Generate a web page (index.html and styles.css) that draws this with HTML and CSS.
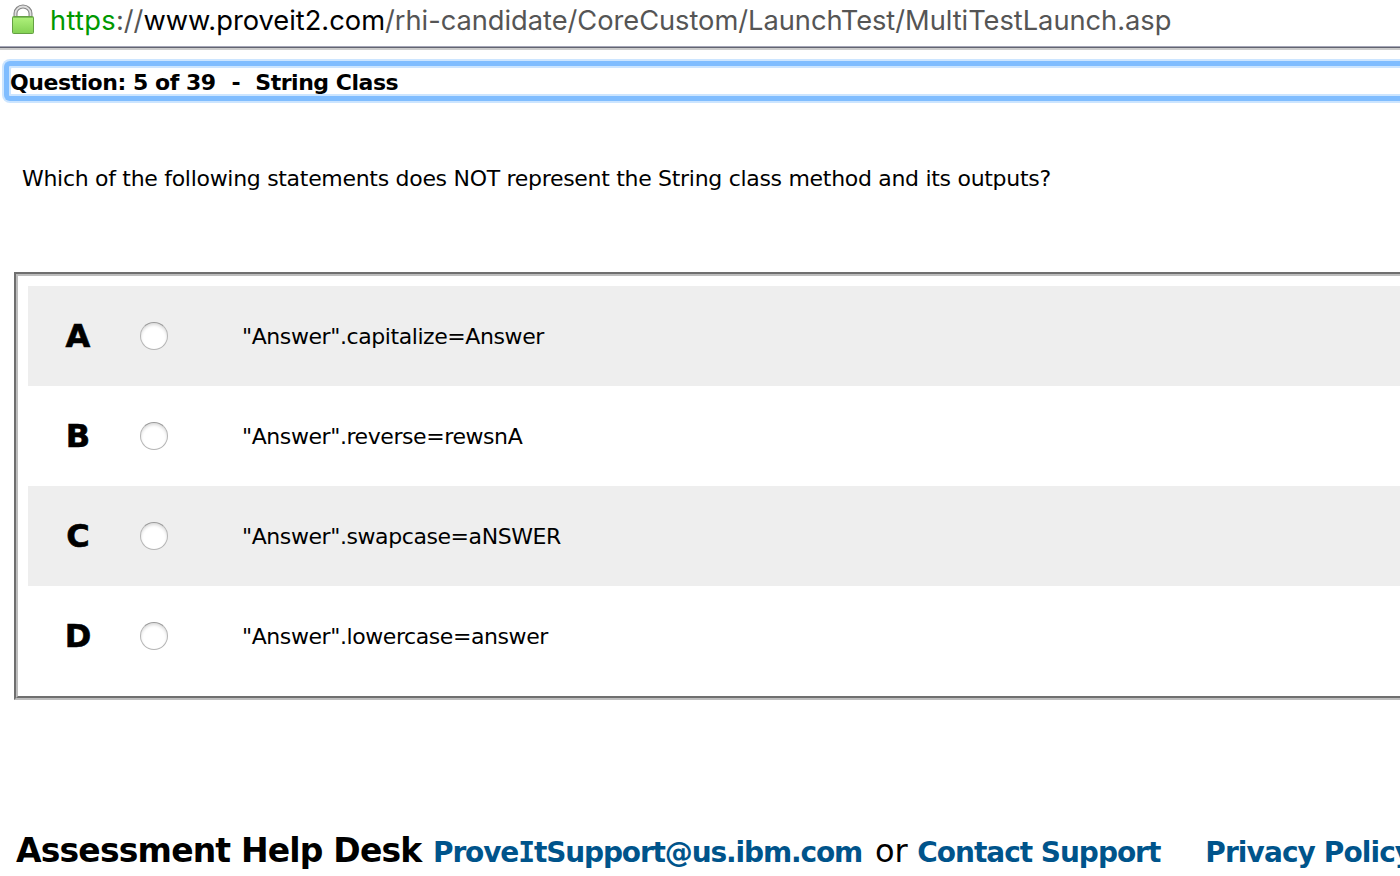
FILE: index.html
```html
<!DOCTYPE html>
<html lang="en">
<head>
<meta charset="utf-8">
<title>Assessment</title>
<link rel="stylesheet" href="styles.css">
</head>
<body>
<header class="address">
  <svg class="lock" width="24" height="32" viewBox="0 0 24 32">
    <defs>
      <linearGradient id="body" x1="0" y1="0" x2="0" y2="1"><stop offset="0" stop-color="#b1f27d"/><stop offset="1" stop-color="#83d153"/></linearGradient>
    </defs>
    <path d="M4.5 14V9.5a7.5 7 0 0 1 15 0V14" fill="none" stroke="#858585" stroke-width="4"/>
    <path d="M4.5 14V9.5a7.5 7 0 0 1 15 0V14" fill="none" stroke="#dedede" stroke-width="1.8"/>
    <rect x="1.5" y="12.5" width="21" height="17" rx="1" fill="url(#body)" stroke="#65a044"/>
    <path d="M2 13.5h20" stroke="#7cbd57"/>
  </svg>
  <div class="url"><span class="scheme">https</span><span class="sep">://</span><span class="host">www.proveit2.com</span><span class="path">/rhi-candidate/CoreCustom/LaunchTest/MultiTestLaunch.asp</span></div>
</header>
<main>
  <div class="ring"><div class="ring-mid"><h1 class="title"><span class="count">Question: 5 of 39</span><span class="dash">-</span><span class="topic">String Class</span></h1></div></div>
  <p class="question">Which of the following statements does NOT represent the String class method and its outputs?</p>
  <div class="frame"><div class="frame-inner">
    <label class="row shaded"><b class="letter">A</b><i class="radio"></i><span class="answer">"Answer".capitalize=Answer</span></label>
    <label class="row"><b class="letter">B</b><i class="radio"></i><span class="answer">"Answer".reverse=rewsnA</span></label>
    <label class="row shaded"><b class="letter">C</b><i class="radio"></i><span class="answer">"Answer".swapcase=aNSWER</span></label>
    <label class="row"><b class="letter">D</b><i class="radio"></i><span class="answer">"Answer".lowercase=answer</span></label>
  </div></div>
</main>
<footer class="footer"><b class="desk">Assessment Help Desk</b><a class="link mail">Prove<span class="serif-i">I</span>tSupport@us.ibm.com</a><span class="or">or</span><a class="link contact">Contact Support</a><a class="link privacy">Privacy Policy</a></footer>
</body>
</html>
```
FILE: styles.css
```css
* { box-sizing: border-box; }
body { margin: 0; width: 1400px; height: 876px; overflow: hidden; background: #fff; color: #000; font-family: Verdana, "DejaVu Sans", sans-serif; }
.address { height: 50px; display: flex; border-bottom: 2px solid #ccc; box-shadow: inset 0 -1px #626370, inset 0 -2px #a5a7b7; padding-left: 11px; }
.lock { margin-top: 4px; flex: none; }
.url { margin-left: 15px; height: 42px; line-height: 42px; font-family: Inter, sans-serif; font-size: 27.27px; white-space: nowrap; display: flex; }
.scheme { color: #090; letter-spacing: .3px; }
.sep, .path { color: #555; }
.path { letter-spacing: -.03px; }
.ring { margin: 9px 0 0 2px; height: 44px; padding: 2px 0 2px 2px; background: #cce5ff; border-radius: 8px 0 0 8px; }
.ring-mid { height: 40px; border: 5px solid #80bdff; border-width: 5px 0 5px 5px; border-radius: 6px 0 0 6px; background: #fff; box-shadow: inset 2px 2px #cce5ff, inset 0 -2px #cce5ff; }
.title { margin: 0; padding: 2px 0 0 1px; font-size: 22px; line-height: 30px; display: flex; white-space: pre; letter-spacing: -.47px; }
.dash { margin: 0 15px 0 16px; }
.question { margin: 62px 0 0 22px; font-size: 22px; line-height: 28px; letter-spacing: -.3px; white-space: nowrap; }
.frame { margin: 79px 0 0 14px; height: 428px; border: 2px solid #6f6f6f; border-bottom-color: #bdbdbd; border-right: 0; }
.frame-inner { height: 424px; border: 2px solid #bdbdbd; border-bottom-color: #6f6f6f; border-right: 0; padding: 10px 0 10px 10px; }
.row { height: 100px; display: flex; align-items: center; }
.shaded { background: #eee; }
.letter { width: 100px; text-align: center; font-size: 32px; -webkit-text-stroke: .6px #000; }
.radio { width: 28px; height: 28px; margin-left: 12px; border: 1px solid #b5b5b5; border-top-color: #999; border-radius: 50%; background: #fff; box-shadow: inset 0 2px 3px #ddd; }
.answer { margin-left: 74px; font-size: 22px; letter-spacing: -.42px; white-space: nowrap; }
.footer { margin: 126px 0 0 16px; height: 50px; display: flex; align-items: baseline; white-space: nowrap; line-height: 50px; }
.desk { font-size: 33px; letter-spacing: -.82px; width: 405px; }
.link { color: #00548b; font-weight: bold; font-size: 28px; letter-spacing: -1.07px; }
.mail { margin-left: 12px; width: 429px; letter-spacing: -1.13px; }
.serif-i { font-family: "DejaVu Sans Mono", monospace; }
.or { font-size: 32px; margin-left: 12px; width: 44px; }
.contact { margin-left: 0; width: 242px; letter-spacing: -1.03px; }
.or, .contact { position: static; }
.or { margin-left: 12px; padding-left: 1px; width: 45px; box-sizing: content-box; margin-right: 10px; letter-spacing: -.2px; }
.privacy { margin-left: 46px; letter-spacing: -.9px; }
```
